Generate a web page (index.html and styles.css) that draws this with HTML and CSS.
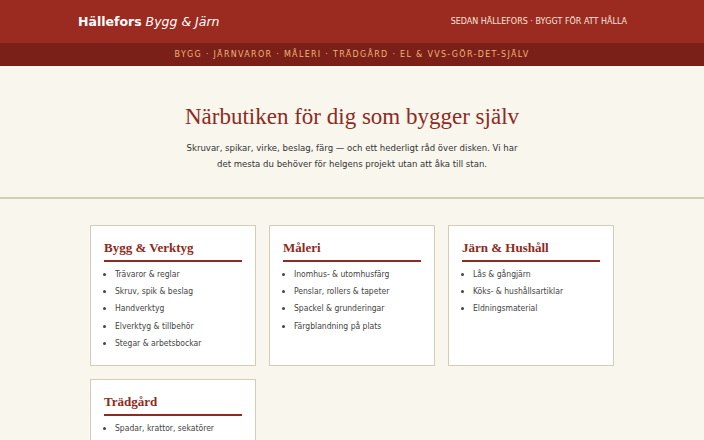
FILE: index.html
```html
<!DOCTYPE html>
<html lang="sv">
<head>
    <meta charset="UTF-8">
    <meta name="viewport" content="width=device-width, initial-scale=1.0">
    <title>Hällefors Bygg &amp; Järn</title>
    <link rel="stylesheet" href="styles.css">
</head>
<body>
    <header class="topbar">
        <div class="wrap topbar-inner">
            <div class="brand"><b>Hällefors</b> <i>Bygg &amp; Järn</i></div>
            <div class="tagline">Sedan Hällefors · Byggt för att hålla</div>
        </div>
    </header>

    <nav class="catnav">
        Bygg · Järnvaror · Måleri · Trädgård · El &amp; VVS-gör-det-själv
    </nav>

    <section class="hero">
        <h1>Närbutiken för dig som bygger själv</h1>
        <p>Skruvar, spikar, virke, beslag, färg — och ett hederligt råd över disken. Vi har det mesta du behöver för helgens projekt utan att åka till stan.</p>
    </section>

    <main class="wrap">
        <div class="grid">
            <div class="card">
                <h2>Bygg &amp; Verktyg</h2>
                <ul>
                    <li>Trävaror &amp; reglar</li>
                    <li>Skruv, spik &amp; beslag</li>
                    <li>Handverktyg</li>
                    <li>Elverktyg &amp; tillbehör</li>
                    <li>Stegar &amp; arbetsbockar</li>
                </ul>
            </div>
            <div class="card">
                <h2>Måleri</h2>
                <ul>
                    <li>Inomhus- &amp; utomhusfärg</li>
                    <li>Penslar, rollers &amp; tapeter</li>
                    <li>Spackel &amp; grunderingar</li>
                    <li>Färgblandning på plats</li>
                </ul>
            </div>
            <div class="card">
                <h2>Järn &amp; Hushåll</h2>
                <ul>
                    <li>Lås &amp; gångjärn</li>
                    <li>Köks- &amp; hushållsartiklar</li>
                    <li>Eldningsmaterial</li>
                </ul>
            </div>
            <div class="card">
                <h2>Trädgård</h2>
                <ul>
                    <li>Spadar, krattor, sekatörer</li>
                    <li>Jord, gödsel &amp; frö</li>
                    <li>Slangar &amp; bevattning</li>
                </ul>
            </div>
        </div>
    </main>
</body>
</html>
```

FILE: styles.css
```css
body {
    margin: 0;
    background: #f9f6ee;
    font-family: "DejaVu Sans", Verdana, sans-serif;
    color: #333;
}
.wrap {
    width: 550px;
    margin: 0 auto;
}
.topbar {
    background: #9b2b21;
    color: #fff;
}
.topbar-inner {
    height: 43px;
    display: flex;
    align-items: center;
    justify-content: space-between;
}
.brand {
    font-size: 12.5px;
    padding-left: 1px;
}
.brand i {
    font-weight: normal;
}
.tagline {
    font-size: 8px;
    text-transform: uppercase;
    color: #f6e6dc;
}
.catnav {
    background: #7b2018;
    color: #f0b37a;
    height: 23px;
    line-height: 23px;
    text-align: center;
    font-size: 8px;
    text-transform: uppercase;
    letter-spacing: 1.3px;
}
.hero {
    text-align: center;
    padding: 38px 0 25px;
    border-bottom: 2px solid #d4ccb6;
}
.hero h1 {
    margin: 0 0 10px;
    font-family: "Liberation Serif", Georgia, serif;
    font-weight: normal;
    font-size: 23px;
    color: #8c2b21;
}
.hero p {
    margin: 0 auto;
    width: 336px;
    font-family: "DejaVu Sans Condensed", "DejaVu Sans", sans-serif;
    font-stretch: condensed;
    font-size: 9.5px;
    line-height: 16px;
}
.grid {
    display: grid;
    grid-template-columns: repeat(3, 1fr);
    gap: 13px;
    padding: 26px 13px;
}
.card {
    background: #fff;
    border: 1px solid #d4ccb6;
    padding: 14px 13px 13px;
}
.card h2 {
    margin: 0 0 4px;
    padding-bottom: 4px;
    font-family: "Liberation Serif", Georgia, serif;
    font-size: 13px;
    color: #8c2b21;
    border-bottom: 2px solid #8c2b21;
}
.card ul {
    margin: 0;
    padding-left: 11px;
    font-family: "DejaVu Sans Condensed", "DejaVu Sans", sans-serif;
    font-stretch: condensed;
    font-size: 8.5px;
    color: #444;
}
.card li {
    line-height: 17.2px;
}
```
